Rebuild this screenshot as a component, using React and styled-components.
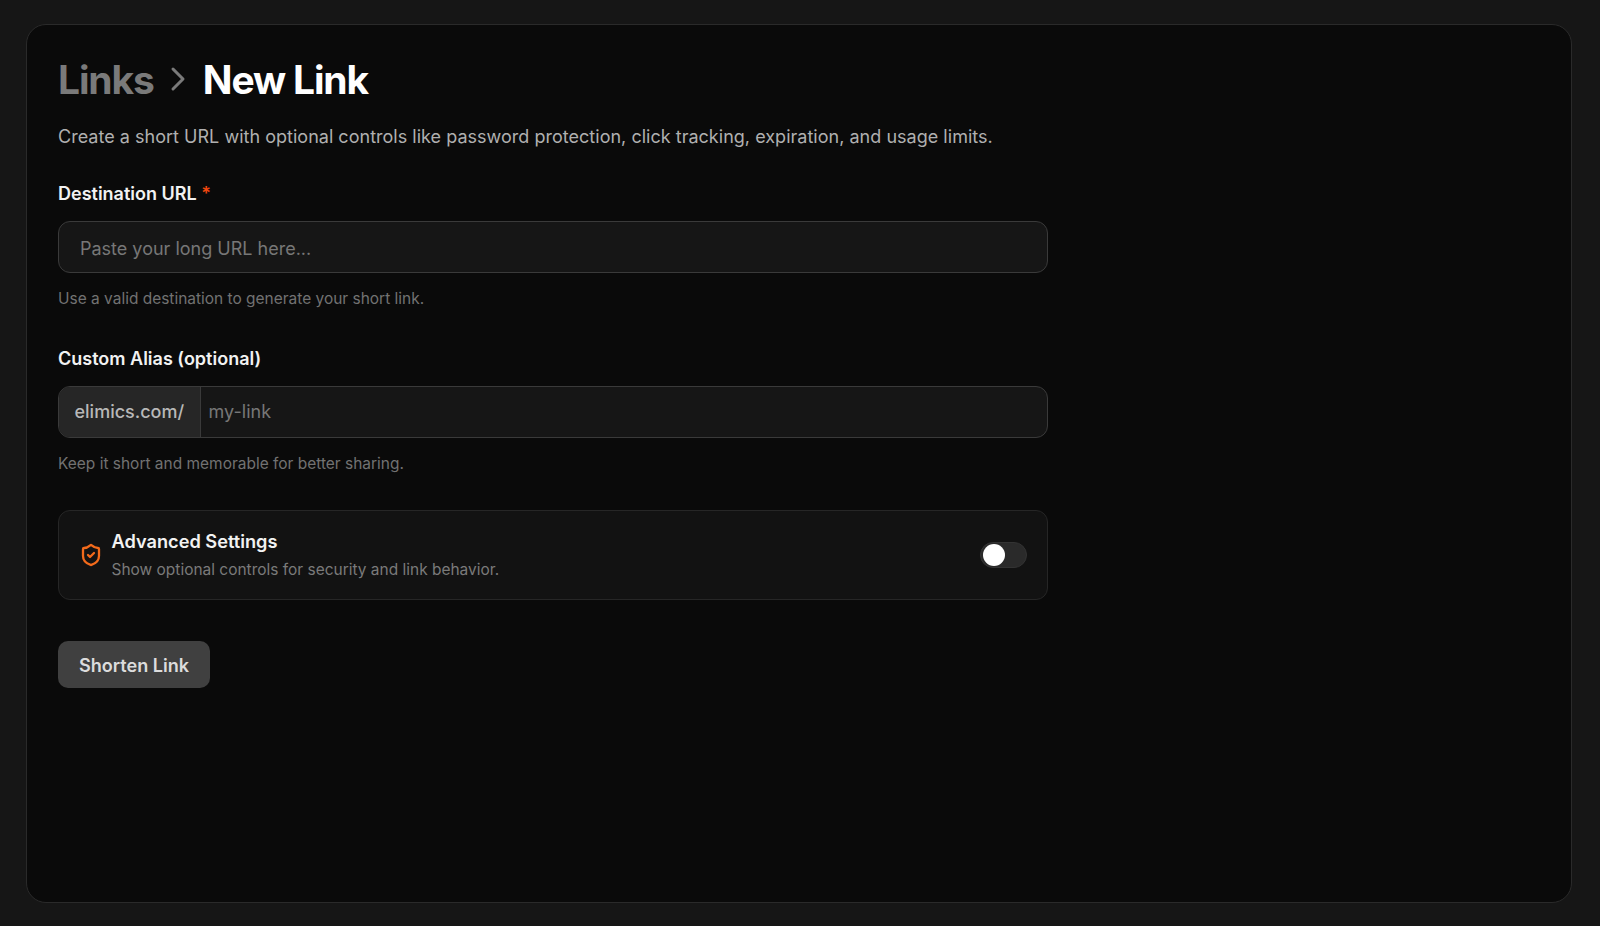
import React from 'react';
import styled, { createGlobalStyle } from 'styled-components';
import { ChevronRight, ShieldCheck } from 'lucide-react';

const GlobalStyle = createGlobalStyle`
  * { box-sizing: border-box; }
  html, body { margin: 0; height: 100%; background: #161616; }
  body { font-family: Inter, "Noto Sans", sans-serif; color: #fff; }
`;

const Page = styled.div`
  height: 926px;
  padding: 24px 28px 23px 26px;
  overflow: hidden;
`;

const Card = styled.main`
  height: 100%;
  padding: 30px 31px;
  background: #0a0a0a;
  border: 1px solid #2a2a2a;
  border-radius: 20px;
`;

const Heading = styled.h1`
  display: flex;
  align-items: center;
  gap: 4.6px;
  margin: 0;
  height: 48px;
  font-size: 39px;
  font-weight: 700;
  letter-spacing: -1.15px;
  color: #fff;
`;

const Crumb = styled.span`
  color: #7a7a7a;
`;

const CrumbIcon = styled(ChevronRight)`
  color: #7a7a7a;
  width: 40px;
  height: 40px;
  stroke-width: 1.8;
`;

const Intro = styled.p`
  margin: 20px 0 0;
  font-size: 18px;
  letter-spacing: 0.02px;
  line-height: 28px;
  color: #b0b0b0;
`;

const Form = styled.form`
  width: 990px;
  margin-top: 31px;
  display: flex;
  flex-direction: column;
`;

const Field = styled.div`
  margin-bottom: ${(p) => p.$gap}px;
`;

const Label = styled.label`
  display: block;
  margin-bottom: 15px;
  font-size: 18px;
  line-height: 24px;
  font-weight: 600;
  color: #f2f2f2;
`;

const Required = styled.span`
  color: #f1460e;
`;

const TextInput = styled.input`
  flex: 1;
  min-width: 0;
  border: 0;
  outline: 0;
  background: transparent;
  font: inherit;
  font-size: 18px;
  color: #fff;
  padding: ${(p) => (p.$tight ? '0 8px 1px' : '2px 21px 0')};

  &::placeholder {
    color: #777;
    opacity: 1;
  }
`;

const InputBox = styled.div`
  display: flex;
  align-items: stretch;
  height: 52px;
  background: #161616;
  border: 1px solid #3a3a3a;
  border-radius: 12px;
  overflow: hidden;
`;

const Prefix = styled.span`
  display: flex;
  align-items: center;
  padding: 0 15.5px 1px;
  background: #262626;
  border-right: 1px solid #3a3a3a;
  font-size: 18px;
  font-weight: 500;
  color: #b8b8b8;
`;

const Hint = styled.p`
  margin: 14px 0 0;
  font-size: 15.47px;
  line-height: 24px;
  color: #727272;
`;

const Panel = styled.div`
  display: flex;
  align-items: center;
  height: 90px;
  padding: 0 20px 0 19.5px;
  background: #121212;
  border: 1px solid #262626;
  border-radius: 12px;
`;

const PanelIcon = styled(ShieldCheck)`
  flex: none;
  width: 24px;
  height: 24px;
  stroke-width: 2.3;
  color: #f26a1b;
`;

const PanelText = styled.div`
  flex: 1;
  margin-left: 9px;
`;

const PanelTitle = styled.div`
  font-size: 18.2px;
  line-height: 26px;
  font-weight: 600;
  color: #f2f2f2;
`;

const PanelNote = styled.div`
  margin-top: 4px;
  font-size: 15.47px;
  line-height: 24px;
  color: #7a7a7a;
`;

const Switch = styled.span`
  display: flex;
  align-items: center;
  width: 47px;
  height: 26px;
  padding: 0 1.5px;
  background: #2a2a2a;
  border: 1px solid #333;
  border-radius: 13px;
`;

const Thumb = styled.span`
  width: 22px;
  height: 22px;
  background: #fff;
  border-radius: 50%;
`;

const Submit = styled.button`
  align-self: flex-start;
  width: 152px;
  height: 47px;
  margin-top: 41px;
  padding-bottom: 1px;
  border: 0;
  border-radius: 10px;
  background: #404040;
  font: inherit;
  font-size: 18.1px;
  font-weight: 600;
  color: #dcdcdc;
`;

const App = () => {
  return (
    <Page>
      <GlobalStyle />
      <Card>
        <Heading>
          <Crumb>Links</Crumb>
          <CrumbIcon />
          <span>New Link</span>
        </Heading>
        <Intro>
          Create a short URL with optional controls like password protection, click tracking, expiration, and usage limits.
        </Intro>
        <Form>
          <Field $gap={36}>
            <Label>Destination URL <Required>*</Required></Label>
            <InputBox>
              <TextInput placeholder="Paste your long URL here..." />
            </InputBox>
            <Hint>Use a valid destination to generate your short link.</Hint>
          </Field>
          <Field $gap={34}>
            <Label>Custom Alias (optional)</Label>
            <InputBox>
              <Prefix>elimics.com/</Prefix>
              <TextInput $tight placeholder="my-link" />
            </InputBox>
            <Hint>Keep it short and memorable for better sharing.</Hint>
          </Field>
          <Panel>
            <PanelIcon />
            <PanelText>
              <PanelTitle>Advanced Settings</PanelTitle>
              <PanelNote>Show optional controls for security and link behavior.</PanelNote>
            </PanelText>
            <Switch><Thumb /></Switch>
          </Panel>
          <Submit type="button">Shorten Link</Submit>
        </Form>
      </Card>
    </Page>
  );
};

export default App;
